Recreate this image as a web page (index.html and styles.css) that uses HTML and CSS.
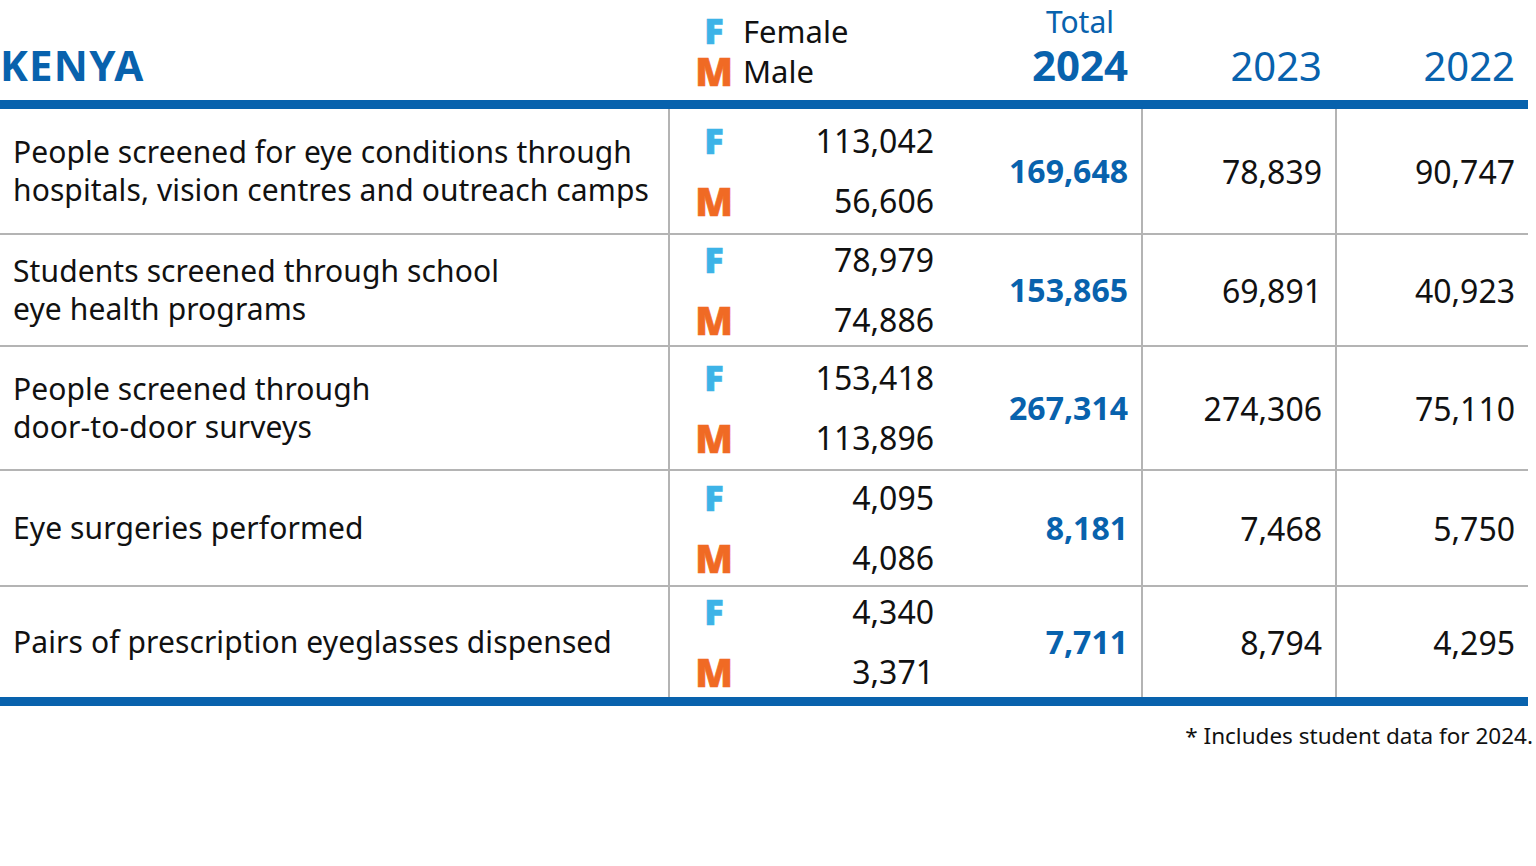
FILE: index.html
```html
<!DOCTYPE html>
<html lang="en">
<head>
<meta charset="utf-8">
<title>Kenya</title>
<link rel="stylesheet" href="styles.css">
</head>
<body>
<div class="page">
  <div class="table">
    <div class="head">
      <div class="hcell country">KENYA</div>
      <div class="hcell hmid">
        <div class="legend">
          <span class="lt f">F</span><span class="lname">Female</span>
          <span class="lt m">M</span><span class="lname">Male</span>
        </div>
        <div class="totalhead">
          <span class="totlabel">Total</span>
          <span class="totyear">2024</span>
        </div>
      </div>
      <div class="hcell year">2023</div>
      <div class="hcell year">2022</div>
    </div>

    <div class="row r1">
      <div class="label">People screened for eye conditions through<br>hospitals, vision centres and outreach camps</div>
      <div class="mid">
        <span class="lt f">F</span><span class="num">113,042</span>
        <span class="lt m">M</span><span class="num">56,606</span>
        <span class="total">169,648</span>
      </div>
      <div class="val">78,839</div>
      <div class="val">90,747</div>
    </div>

    <div class="row r2">
      <div class="label">Students screened through school<br>eye health programs</div>
      <div class="mid">
        <span class="lt f">F</span><span class="num">78,979</span>
        <span class="lt m">M</span><span class="num">74,886</span>
        <span class="total">153,865</span>
      </div>
      <div class="val">69,891</div>
      <div class="val">40,923</div>
    </div>

    <div class="row r3">
      <div class="label">People screened through<br>door-to-door surveys</div>
      <div class="mid">
        <span class="lt f">F</span><span class="num">153,418</span>
        <span class="lt m">M</span><span class="num">113,896</span>
        <span class="total">267,314</span>
      </div>
      <div class="val">274,306</div>
      <div class="val">75,110</div>
    </div>

    <div class="row r4">
      <div class="label">Eye surgeries performed</div>
      <div class="mid">
        <span class="lt f">F</span><span class="num">4,095</span>
        <span class="lt m">M</span><span class="num">4,086</span>
        <span class="total">8,181</span>
      </div>
      <div class="val">7,468</div>
      <div class="val">5,750</div>
    </div>

    <div class="row r5 last">
      <div class="label">Pairs of prescription eyeglasses dispensed</div>
      <div class="mid">
        <span class="lt f">F</span><span class="num">4,340</span>
        <span class="lt m">M</span><span class="num">3,371</span>
        <span class="total">7,711</span>
      </div>
      <div class="val">8,794</div>
      <div class="val">4,295</div>
    </div>
  </div>
  <div class="note">* Includes student data for 2024.</div>
</div>
</body>
</html>
```

FILE: styles.css
```css
html, body {
  margin: 0;
  padding: 0;
  background: #ffffff;
}

body {
  font-family: "Noto Sans", "Open Sans", sans-serif;
  color: #111111;
}

.page {
  width: 1536px;
}

.table {
  width: 1528px;
  border-bottom: 9px solid #0862ad;
}

.head {
  display: grid;
  grid-template-columns: 668px 473px 194px 193px;
  height: 100px;
  border-bottom: 9px solid #0862ad;
}

.country {
  display: flex;
  align-items: flex-end;
  color: #0862ad;
  font-weight: 700;
  font-size: 42px;
  line-height: 40px;
  padding-bottom: 15px;
  letter-spacing: 1.2px;
}

.hmid {
  display: flex;
  justify-content: space-between;
  padding-left: 26px;
  padding-right: 13px;
}

.legend {
  display: grid;
  grid-template-columns: 40px auto;
  grid-template-rows: 40px 40px;
  column-gap: 9px;
  align-items: center;
  padding-top: 11px;
}

.legend .lname {
  font-size: 31px;
  line-height: 40px;
}

.totalhead {
  display: flex;
  flex-direction: column;
  align-items: center;
  color: #0862ad;
  padding-top: 2px;
}

.totlabel {
  font-size: 30px;
  line-height: 40px;
}

.totyear {
  font-size: 42px;
  font-weight: 700;
  line-height: 46px;
}

.year {
  display: flex;
  align-items: flex-end;
  justify-content: flex-end;
  color: #0862ad;
  font-size: 40px;
  line-height: 40px;
  padding-right: 13px;
  padding-bottom: 14px;
}

.lt {
  font-weight: 900;
  font-size: 36px;
  line-height: 60px;
  text-align: center;
  -webkit-text-stroke: 0.6px currentColor;
}

.legend .lt {
  line-height: 40px;
}

.lt.f {
  color: #3db3e7;
}

.lt.m {
  color: #f06a24;
  font-size: 39px;
}

.row {
  display: grid;
  grid-template-columns: 668px 473px 194px 193px;
  grid-template-rows: minmax(0, 1fr);
  border-bottom: 2px solid #b4b4b4;
}

.row.last {
  border-bottom: none;
}

.r1 { height: 124px; }
.r2 { height: 110px; }
.r3 { height: 122px; }
.r4 { height: 114px; }
.r5 { height: 110px; }

.label {
  display: flex;
  align-items: center;
  padding-left: 13px;
  font-size: 30px;
  letter-spacing: 0.1px;
  line-height: 38px;
}

.mid {
  display: grid;
  grid-template-columns: 40px 200px 1fr;
  grid-template-rows: 60px 60px;
  align-content: center;
  align-items: center;
  border-left: 2px solid #b4b4b4;
  padding-left: 24px;
  padding-right: 13px;
  min-height: 0;
}

.num {
  text-align: right;
  font-size: 32px;
  line-height: 60px;
}

.total {
  grid-column: 3;
  grid-row: 1 / span 2;
  text-align: right;
  color: #0862ad;
  font-weight: 700;
  font-size: 32px;
  line-height: 40px;
}

.val {
  display: flex;
  align-items: center;
  justify-content: flex-end;
  border-left: 2px solid #b4b4b4;
  padding-right: 13px;
  font-size: 32px;
}

.note {
  text-align: right;
  padding-right: 3px;
  margin-top: 17px;
  font-size: 22.5px;
  line-height: 26px;
}
```
